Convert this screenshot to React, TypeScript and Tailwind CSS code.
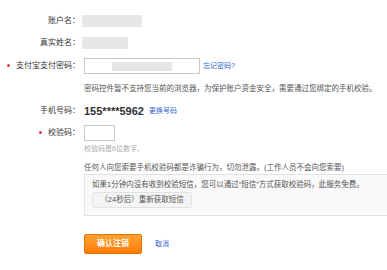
import React from 'react';

const Label: React.FC<{ text: string; required?: boolean }> = ({ text, required }) => (
  <div className="w-[80px] shrink-0 text-right text-[8px] leading-[12px] text-[#333] whitespace-nowrap">
    {required && <span className="inline-block w-[3px] h-[3px] rounded-full bg-[#e4393c] align-middle mr-[6px] mb-[1px]" />}
    {text}
  </div>
);

export default function App() {
  return (
    <div className="w-[387px] h-[270px] bg-white overflow-hidden font-['Liberation_Sans','Noto_Sans_CJK_SC',sans-serif] pt-[15px]">
      {/* account */}
      <div className="flex items-center h-[12px]">
        <Label text="账户名：" />
        <div className="ml-[2px] w-[60px] h-[12px] bg-[#e6e6e6]" />
      </div>

      <div className="flex items-center h-[12px] mt-[10px]">
        <Label text="真实姓名：" />
        <div className="ml-[2px] w-[46px] h-[12px] bg-[#e6e6e6]" />
      </div>

      {/* pay password */}
      <div className="flex items-center h-[16px] mt-[9px]">
        <Label text="支付宝支付密码：" required />
        <div className="ml-[4px] w-[116px] h-[16px] border border-[#c8c8c8] bg-white flex items-center pl-[27px]">
          <div className="w-[60px] h-[9px] bg-[#e6e6e6]" />
        </div>
        <a className="ml-[3px] text-[7px] text-[#3366cc]">忘记密码?</a>
      </div>

      <div className="pl-[84px] mt-[10px] text-[7.5px] leading-[10px] text-[#555] whitespace-nowrap">
        密码控件暂不支持您当前的浏览器，为保护账户资金安全，需要通过您绑定的手机校验。
      </div>

      {/* phone */}
      <div className="flex items-center h-[12px] mt-[11px]">
        <Label text="手机号码：" />
        <span className="ml-[4px] text-[11px] font-bold text-[#333] leading-[12px]">155****5962</span>
        <a className="ml-[5px] text-[7px] text-[#3366cc]">更换号码</a>
      </div>

      {/* code */}
      <div className="flex items-center h-[16px] mt-[8px]">
        <Label text="校验码：" required />
        <div className="ml-[4px] w-[31px] h-[16px] border border-[#c8c8c8] bg-white" />
      </div>

      <div className="pl-[84px] mt-[3px] text-[7px] leading-[10px] text-[#aaa]">校验码是6位数字。</div>

      <div className="pl-[84px] mt-[9px] text-[7.5px] leading-[10px] text-[#555] whitespace-nowrap">
        任何人向您索要手机校验码都是诈骗行为，切勿泄露。(工作人员不会向您索要)
      </div>

      <div className="ml-[84px] mt-[1px] h-[42px] border border-r-0 border-[#e3e3e3] bg-[#f9f9f9] pl-[7px] pt-[5px]">
        <div className="text-[7.5px] leading-[10px] text-[#555] whitespace-nowrap">
          如果1分钟内没有收到校验短信，您可以通过“短信”方式获取校验码，此服务免费。
        </div>
        <button className="mt-[2px] w-[100px] h-[16px] border border-[#e2e2e2] bg-[#f4f4f4] rounded-[2px] text-[7.5px] text-[#555] flex items-center justify-center">
          （24秒后）重新获取短信
        </button>
      </div>

      {/* actions */}
      <div className="flex items-center pl-[84px] mt-[18px]">
        <button className="w-[58px] h-[20px] rounded-[2px] border border-[#e8720c] bg-gradient-to-b from-[#ffa430] to-[#ff7a00] text-white text-[8px] font-bold">
          确认注销
        </button>
        <a className="ml-[13px] text-[7px] text-[#3366cc]">取消</a>
      </div>
    </div>
  );
}
